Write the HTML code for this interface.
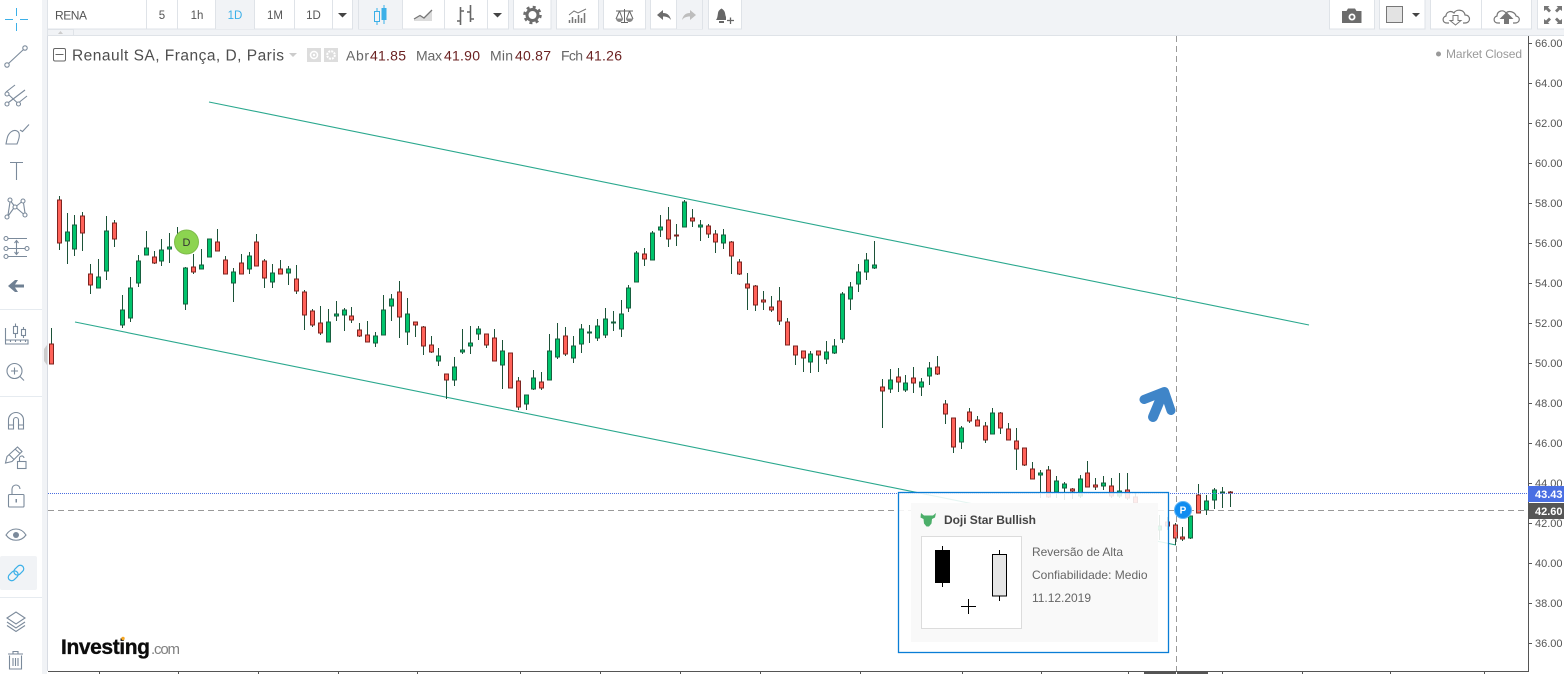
<!DOCTYPE html>
<html><head><meta charset="utf-8"><title>Renault SA</title>
<style>
html,body{margin:0;padding:0;background:#fff;width:1564px;height:674px;overflow:hidden}
svg{display:block}
text{font-family:"Liberation Sans",sans-serif}
.b{fill:#fff;stroke:#dfe3e8;stroke-width:1}
.lab{font-size:11.5px;fill:#555;text-anchor:middle}
.i{fill:none;stroke:#7b8a9b;stroke-width:1.1}
.t{fill:none;stroke:#777;stroke-width:1.2}
.ax{font-size:11px;fill:#555}
</style></head><body>
<svg width="1564" height="674" viewBox="0 0 1564 674" xmlns="http://www.w3.org/2000/svg">
<rect width="1564" height="674" fill="#fff"/>
<!-- lines -->
<g fill="none">
<path d="M209 102L1309 325" stroke="#2aa88e" stroke-width="1.1"/>
<path d="M75 322L1176 545" stroke="#2aa88e" stroke-width="1.1"/>
</g>
<!-- wicks -->
<path fill="none" stroke="#1c5238" stroke-width="1" d="M51.5 328V364M59.5 196V250M67.5 213V264M74.5 215V256M82.5 212V251M90.5 264V294M98.5 259V288M106.5 216V280M114.5 220V247M122.5 295V328M130.5 277V322M138.5 255V287M146.5 231V255M154.5 251V264M161.5 239V266M169.5 233V263M177.5 227V245M185.5 267V310M193.5 254V274M201.5 249V269M209.5 239V257M217.5 229V251M225.5 256V274M233.5 268V302M241.5 254V274M249.5 252V274M256.5 234V266M264.5 259V288M272.5 264V288M280.5 260V274M288.5 266V285M296.5 265V294M304.5 290V330M312.5 309V327M320.5 306V335M328.5 309V342M336.5 301V321M344.5 308V331M351.5 307V323M359.5 323V337M367.5 321V342M375.5 332V347M383.5 295V335M391.5 294V321M399.5 281V338M407.5 298V345M415.5 322V337M423.5 326V355M431.5 336V353M438.5 348V366M446.5 374V399M454.5 357V386M462.5 329V354M470.5 326V354M478.5 326V340M486.5 334V348M494.5 329V361M502.5 340V389M510.5 353V388M518.5 377V410M526.5 395V410M533.5 370V390M541.5 372V390M549.5 334V380M557.5 323V359M565.5 327V356M573.5 336V363M581.5 324V353M589.5 325V343M597.5 319V341M605.5 308V338M613.5 311V331M621.5 300V337M628.5 285V312M636.5 251V282M644.5 248V266M652.5 231V260M660.5 215V237M668.5 207V247M676.5 224V246M684.5 200V227M692.5 209V227M700.5 220V241M708.5 224V238M715.5 230V253M723.5 229V249M731.5 241V274M739.5 259V275M747.5 273V310M755.5 285V311M763.5 291V310M771.5 296V312M779.5 287V325M787.5 318V345M795.5 346V365M803.5 351V372M810.5 351V373M818.5 351V372M826.5 341V364M834.5 339V354M842.5 292V343M850.5 282V310M858.5 264V292M866.5 253V280M874.5 241V269M882.5 379V428M890.5 369V393M898.5 368V392M905.5 375V392M913.5 367V393M921.5 378V396M929.5 362V385M937.5 356V375M945.5 400V424M953.5 418V453M961.5 426V449M969.5 408V423M977.5 416V426M985.5 422V443M992.5 408V434M1000.5 412V434M1008.5 423V440M1016.5 428V470M1024.5 448V466M1032.5 462V479M1040.5 470V498M1048.5 466V498M1056.5 476V498M1064.5 482V500M1072.5 488V499M1080.5 475V498M1087.5 461V487M1095.5 478V490M1103.5 476V490M1111.5 478V498M1119.5 473V498M1127.5 473V500M1135.5 493V505M1159.5 515V540M1167.5 517V530M1175.5 523V545M1182.5 527V541M1190.5 516V539M1198.5 484V513M1206.5 495V515M1214.5 488V509M1222.5 487V508M1230.5 491V507"/>
<!-- green bodies -->
<path fill="#00c46c" stroke="#17603f" stroke-width="1" d="M65.5 232h4V241h-4zM72.5 225h4V249h-4zM96.5 277h4V288h-4zM104.5 231h4V271h-4zM120.5 310h4V325h-4zM128.5 288h4V318h-4zM136.5 261h4V283h-4zM144.5 248h4V255h-4zM159.5 250h4V261h-4zM167.5 247h4V249h-4zM183.5 268h4V304h-4zM199.5 265h4V269h-4zM207.5 239h4V257h-4zM231.5 272h4V283h-4zM247.5 256h4V269h-4zM270.5 273h4V282h-4zM286.5 269h4V273h-4zM326.5 322h4V342h-4zM334.5 314h4V316h-4zM342.5 310h4V315h-4zM373.5 336h4V343h-4zM381.5 310h4V335h-4zM389.5 299h4V306h-4zM405.5 314h4V332h-4zM436.5 356h4V361h-4zM452.5 367h4V380h-4zM460.5 350h4V352h-4zM468.5 343h4V346h-4zM476.5 329h4V334h-4zM500.5 351h4V365h-4zM524.5 395h4V404h-4zM531.5 378h4V389h-4zM547.5 351h4V380h-4zM555.5 339h4V357h-4zM571.5 346h4V358h-4zM579.5 329h4V344h-4zM587.5 332h4V333h-4zM595.5 326h4V338h-4zM603.5 319h4V335h-4zM611.5 322h4V323h-4zM619.5 314h4V329h-4zM626.5 288h4V308h-4zM634.5 253h4V282h-4zM650.5 233h4V260h-4zM658.5 227h4V230h-4zM682.5 202h4V227h-4zM698.5 225h4V227h-4zM721.5 235h4V243h-4zM808.5 354h4V362h-4zM824.5 352h4V359h-4zM832.5 346h4V353h-4zM840.5 294h4V339h-4zM848.5 287h4V299h-4zM856.5 272h4V284h-4zM864.5 260h4V272h-4zM872.5 265h4V268h-4zM888.5 380h4V389h-4zM903.5 383h4V390h-4zM919.5 382h4V387h-4zM927.5 368h4V376h-4zM959.5 428h4V442h-4zM990.5 413h4V434h-4zM1038.5 473h4V475h-4zM1054.5 481h4V492h-4zM1062.5 484h4V488h-4zM1078.5 479h4V496h-4zM1101.5 483h4V486h-4zM1117.5 491h4V496h-4zM1157.5 526h4V530h-4zM1188.5 516h4V538h-4zM1204.5 501h4V510h-4zM1212.5 490h4V500h-4zM1220.5 492h4V493h-4z"/>
<!-- red bodies -->
<path fill="#ff6259" stroke="#7d2420" stroke-width="1" d="M49.5 344h4V364h-4zM57.5 200h4V243h-4zM80.5 216h4V233h-4zM88.5 274h4V285h-4zM112.5 223h4V239h-4zM152.5 257h4V263h-4zM191.5 267h4V272h-4zM215.5 242h4V251h-4zM223.5 260h4V274h-4zM239.5 263h4V274h-4zM254.5 242h4V266h-4zM262.5 261h4V278h-4zM278.5 269h4V274h-4zM294.5 279h4V291h-4zM302.5 292h4V315h-4zM310.5 311h4V325h-4zM318.5 323h4V333h-4zM349.5 316h4V320h-4zM357.5 330h4V336h-4zM365.5 335h4V342h-4zM397.5 292h4V317h-4zM413.5 322h4V325h-4zM421.5 327h4V346h-4zM429.5 345h4V352h-4zM444.5 374h4V380h-4zM484.5 334h4V345h-4zM492.5 338h4V361h-4zM508.5 353h4V388h-4zM516.5 381h4V407h-4zM539.5 382h4V388h-4zM563.5 336h4V354h-4zM642.5 254h4V259h-4zM666.5 220h4V239h-4zM674.5 235h4V236h-4zM690.5 218h4V221h-4zM706.5 226h4V234h-4zM713.5 234h4V242h-4zM729.5 242h4V256h-4zM737.5 262h4V274h-4zM745.5 284h4V288h-4zM753.5 286h4V305h-4zM761.5 300h4V302h-4zM769.5 307h4V310h-4zM777.5 301h4V321h-4zM785.5 322h4V345h-4zM793.5 346h4V355h-4zM801.5 351h4V358h-4zM816.5 351h4V355h-4zM880.5 387h4V391h-4zM896.5 377h4V382h-4zM911.5 378h4V383h-4zM935.5 367h4V374h-4zM943.5 404h4V414h-4zM951.5 418h4V447h-4zM967.5 412h4V421h-4zM975.5 420h4V426h-4zM983.5 426h4V440h-4zM998.5 413h4V428h-4zM1006.5 429h4V440h-4zM1014.5 441h4V449h-4zM1022.5 448h4V465h-4zM1030.5 469h4V479h-4zM1046.5 470h4V497h-4zM1070.5 489h4V491h-4zM1085.5 473h4V487h-4zM1093.5 485h4V487h-4zM1109.5 486h4V496h-4zM1125.5 490h4V498h-4zM1133.5 497h4V503h-4zM1165.5 522h4V526h-4zM1173.5 525h4V538h-4zM1180.5 537h4V539h-4zM1196.5 495h4V513h-4zM1228.5 492h4V493h-4z"/>
<!-- price / cross lines -->
<path d="M48 493.5H1528" stroke="#4a6ee0" stroke-width="1" stroke-dasharray="1 1" fill="none"/>
<path d="M48 510.5H1528" stroke="#999" stroke-width="1" stroke-dasharray="6 4" fill="none"/>
<path d="M1176.5 36V671" stroke="#999" stroke-width="1" stroke-dasharray="6 4" fill="none"/>
<!-- D marker -->
<circle cx="186.5" cy="242" r="12" fill="#8cd450" stroke="#7fbb4c" stroke-width="1"/>
<text x="186.5" y="246" font-size="11" fill="#333" text-anchor="middle">D</text>
<!-- arrow -->
<g fill="none" stroke="#3f85c8" stroke-linecap="round" stroke-linejoin="round">
<path d="M1144 399.5L1164.500 391.500L1171 410.500" stroke-width="9"/>
<path d="M1163 393L1153 417" stroke-width="10"/>
</g>
<!-- tooltip -->
<rect x="898.5" y="492.5" width="270" height="160" fill="#fff" fill-opacity=".88" stroke="#0a7dd6" stroke-width="1.3"/>
<rect x="911" y="503" width="247" height="139" fill="#f9f9f9"/>
<path d="M921 513l3 2.500h9l3-2.500l-1 4.500l-3 1.500l-.5 4.500l-2.500 3h-2.500l-2.500-3l-.5-4.500l-3-1.500z" fill="#4caf6a"/>
<text x="944" y="524" font-size="12" font-weight="bold" fill="#444" textLength="92">Doji Star Bullish</text>
<rect x="921.500" y="536.500" width="100" height="92" fill="#fff" stroke="#dcdcdc"/>
<path d="M942.500 546V587M968.500 599V614M961 606.500H976M999.500 550V601" stroke="#000" fill="none"/>
<rect x="935" y="550" width="15" height="33" fill="#000"/>
<rect x="992.500" y="554.500" width="14" height="41.500" fill="#e6e6e6" stroke="#000"/>
<g font-size="12" fill="#666">
<text x="1032" y="556" textLength="91">Reversão de Alta</text>
<text x="1032" y="579" textLength="115.500">Confiabilidade: Medio</text>
<text x="1032" y="602" textLength="59">11.12.2019</text>
</g>
<!-- P marker -->
<circle cx="1183" cy="510" r="8.500" fill="#0f8cf0" stroke="#5fb4f5" stroke-width="1"/>
<text x="1183" y="513.500" font-size="10" font-weight="bold" fill="#fff" text-anchor="middle">P</text>
<!-- legend -->
<rect x="53.500" y="48.500" width="12" height="12.500" rx="1.500" fill="#fff" stroke="#666"/>
<path d="M55.500 54.500H63.500" stroke="#666"/>
<text x="72" y="60.500" font-size="15.500" fill="#4e4e4e" textLength="212">Renault SA, França, D, Paris</text>
<path d="M289 53h8l-4 4z" fill="#ccc"/>
<rect x="307" y="48" width="14" height="14" fill="#ddd"/><circle cx="314" cy="55" r="3.500" fill="none" stroke="#fff" stroke-width="1.500"/><circle cx="314" cy="55" r="1.200" fill="#fff"/>
<rect x="324" y="48" width="14" height="14" fill="#ddd"/><circle cx="331" cy="55" r="3.800" fill="none" stroke="#fff" stroke-width="2" stroke-dasharray="2 1"/>
<g font-size="14" fill="#666">
<text x="346" y="60.500" textLength="23">Abr</text>
<text x="416" y="60.500" textLength="26">Max</text>
<text x="490" y="60.500" textLength="23">Min</text>
<text x="561" y="60.500" textLength="22">Fch</text>
</g>
<g font-size="14" fill="#6b2222">
<text x="370" y="60.500" textLength="36">41.85</text>
<text x="444" y="60.500" textLength="36">41.90</text>
<text x="515" y="60.500" textLength="36">40.87</text>
<text x="586" y="60.500" textLength="36">41.26</text>
</g>
<circle cx="1438.500" cy="54" r="2.500" fill="#999"/>
<text x="1446" y="58" font-size="12" fill="#9a9a9a" textLength="76">Market Closed</text>
<!-- logo -->
<text x="61" y="654" font-size="21" font-weight="bold" fill="#0c0c0c" stroke="#0c0c0c" stroke-width=".35" textLength="89">Investing</text>
<text x="151" y="654" font-size="15" fill="#808080" textLength="29">.com</text>
<circle cx="123" cy="638.500" r="1.700" fill="#f5a623"/>
<!-- top bar -->
<rect x="0" y="0" width="1564" height="35" fill="#f1f3f6"/>
<path d="M0 35.500H1564" stroke="#dfe3e8"/>
<path d="M47.500 29.500H73.500V35M47.500 29V35" fill="none" stroke="#dfe3e8"/>
<path d="M58 34l2.500-3l2.500 3z" fill="#ccc"/>
<rect x="47.500" y="-1" width="305" height="30" class="b"/>
<rect x="215" y="0" width="39" height="29" fill="#f1f3f6"/>
<path d="M146.500 0V29M177.500 0V29M215.500 0V29M254.500 0V29M294.500 0V29M332.500 0V29" stroke="#dfe3e8" fill="none"/>
<text x="55" y="19.500" font-size="12" fill="#555" textLength="32">RENA</text>
<text class="lab" x="162" y="19">5</text>
<text class="lab" x="197" y="19">1h</text>
<text class="lab" x="235" y="19" style="fill:#3cb0e8">1D</text>
<text class="lab" x="275" y="19">1M</text>
<text class="lab" x="313.500" y="19">1D</text>
<path d="M338 13h9l-4.500 4.500z" fill="#444"/>
<rect x="358.500" y="-1" width="150" height="30" class="b"/>
<rect x="359" y="0" width="43" height="29" fill="#f1f3f6"/>
<path d="M402.500 0V29M444.500 0V29M487.500 0V29" stroke="#dfe3e8" fill="none"/>
<!-- candles icon -->
<rect x="374.500" y="11.500" width="5" height="10" fill="none" stroke="#3cb0e8"/>
<path d="M377 8V11M377 22V25" stroke="#3cb0e8"/>
<rect x="381.500" y="8" width="5" height="12" fill="#3cb0e8"/><path d="M384 5V24" stroke="#3cb0e8"/>
<!-- area icon -->
<path d="M414 19l6-3.500l4 2.500l8-8V21H414z" fill="#dcdcdc"/><path d="M414 19l6-3.500l4 2.500l8-8" fill="none" stroke="#777" stroke-width="1.300"/>
<!-- bars icon -->
<path d="M460.500 7V25M457 21h3.500M460.500 11h3.500M470.500 5V22M467 12h3.500M470.500 19h3.500" fill="none" stroke="#666" stroke-width="1.600"/>
<path d="M493 13h9l-4.500 4.500z" fill="#444"/>
<rect x="513.500" y="-1" width="37.500" height="30" class="b"/>
<circle cx="532.500" cy="15" r="5.500" fill="none" stroke="#6c6c6c" stroke-width="3"/>
<circle cx="532.500" cy="15" r="8" fill="none" stroke="#6c6c6c" stroke-width="2.500" stroke-dasharray="3 3.280"/>
<rect x="556.500" y="-1" width="42" height="30" class="b"/>
<path d="M569.500 23v-3M572.500 23v-6M575.500 23v-4M578.500 23v-8M581.500 23v-5M584.500 23v-10" stroke="#777" stroke-width="1.500"/>
<path d="M569 15l5-4l4 2l8-4" fill="none" stroke="#777" stroke-width="1"/>
<rect x="603.500" y="-1" width="42" height="30" class="b"/>
<path d="M624.500 9V22M621 22.500h7M616 11H633M619.500 11l-3.500 8M619.500 11l3 8M629.500 11l-3 8M629.500 11l3.500 8" stroke="#666" fill="none"/>
<path d="M616 18.500a3.500 3.500 0 0 0 7 0zM626 18.500a3.500 3.500 0 0 0 7 0z" fill="#888"/>
<rect x="650.500" y="-1" width="52" height="30" class="b"/>
<rect x="677" y="0" width="25" height="29" fill="#f1f3f6"/>
<path d="M676.500 0V29" stroke="#dfe3e8"/>
<path d="M657 15l6-5v3c5 0 7 3 8 7c-2-2.500-4-3.500-8-3.500v3.500z" fill="#6c6c6c"/>
<path d="M696 15l-6-5v3c-5 0-7 3-8 7c2-2.500 4-3.500 8-3.500v3.500z" fill="#bdbdbd"/>
<rect x="708.500" y="-1" width="33" height="30" class="b"/>
<path d="M716 20c1.500-2 1.500-4 2-7c.4-2.500 2-3.500 3.500-4.500c1.500 1 3 2 3.500 4.500c.3 1.500.5 3 1 4v3z" fill="#666"/><rect x="719" y="21" width="5" height="2" fill="#666"/>
<path d="M730.500 17.500v6.500M727 20.500h7" stroke="#666" stroke-width="1.300"/>
<rect x="1329.500" y="-1" width="45" height="30" class="b"/>
<path d="M1342 11h4.500l1.500-2.500h7l1.500 2.500h5v12h-19.500z" fill="#6c6c6c" rx="1"/><circle cx="1352" cy="17" r="3.500" fill="#fff"/><circle cx="1352" cy="17" r="1.700" fill="#6c6c6c"/>
<rect x="1379.500" y="-1" width="45.500" height="30" class="b"/>
<rect x="1386.500" y="6.500" width="16" height="16" fill="#e3e3e3" stroke="#777"/>
<path d="M1412 13h8l-4 4z" fill="#444"/>
<rect x="1430.500" y="-1" width="101" height="30" class="b"/>
<path d="M1481.500 0V29" stroke="#dfe3e8"/>
<path d="M1449 23h-2c-5 0-5-6-1-7c0-4 5-6 8-3c2-4 10-4 11 2c6 0 6 8 0 8h-2" class="t" stroke-width="1"/>
<path d="M1453 15.500h5v5h3l-5.500 4.500l-5.500-4.500h3z" fill="#fff" stroke="#777"/>
<path d="M1500 23h-2c-5 0-5-6-1-7c0-5 6-7 9-3c3-3 9-1 10 3c5 1 4 7-1 7h-2" class="t" stroke-width="1"/>
<path d="M1504 24v-5h-4.500l7-7l7 7h-4.500v5z" fill="#777"/>
<rect x="1537.500" y="-1" width="30" height="30" class="b"/>
<path d="M1544 6h5.500l-1.500 1.500l3 3l-2 2l-3-3l-2 1.500zM1562 6h-5.500l1.500 1.500l-3 3l2 2l3-3l2 1.500zM1544 24h5.500l-1.500-1.500l3-3l-2-2l-3 3l-2-1.500zM1562 24h-5.500l1.500-1.500l-3-3l2-2l3 3l2-1.500z" fill="#777"/>
<!-- left bar -->
<rect x="0" y="0" width="42" height="674" fill="#fff"/>
<rect x="42" y="0" width="5" height="674" fill="#f1f3f6"/>
<path d="M47.500 36V671" stroke="#d8dce3"/>
<path d="M47 345l-3 4v12l3 4z" fill="#ccc"/>
<path d="M0 309.500H42M0 396.500H42M0 597.500H42" stroke="#e6ebf0"/>
<rect x="0" y="556" width="37" height="34" rx="2" fill="#f1f3f6"/>
<path d="M5 19.500H13M20 19.500H28M16.500 8V16M16.500 23V31" stroke="#3cb0e8" fill="none"/>
<g class="i">
<circle cx="25" cy="48" r="2.200"/><circle cx="7" cy="65" r="2.200"/><path d="M23.500 49.500L8.500 63.500"/>
<circle cx="7" cy="104" r="2"/><circle cx="18.500" cy="104" r="2"/><circle cx="7" cy="94" r="2"/>
<path d="M6 92L15 85M8.500 102.500L25 90M19.500 102L27 96M9 95L17 102.500"/>
<path d="M6 144L7 139C8 133 13 129 17 131C21 133 19 139 17 144ZM20 130l2.500 1.500L29 124.500"/>
<path d="M10 162.500H23M16.500 162.500V180"/>
<circle cx="10" cy="200" r="2"/><circle cx="23" cy="201" r="2"/><circle cx="15" cy="207" r="2"/><circle cx="7" cy="217" r="2"/><circle cx="25" cy="215" r="2"/>
<path d="M10 202L8 215M11 201.500L14 205.500M16.500 206L21.500 202M23.500 203L25 213M16.500 208L23.500 214M13.500 208.500L8.500 215.500"/>
<circle cx="6" cy="238.500" r="2"/><circle cx="6" cy="248.500" r="2"/><circle cx="27" cy="248.500" r="2"/><circle cx="6" cy="256.500" r="2"/>
<path d="M8 238.500H27M8 248.500H25M8 256.500H27M16.500 241V254M14.500 243L16.500 240.500L18.500 243M14.500 252L16.500 254.500L18.500 252"/>
<path d="M5.500 328V344H28V340H5.500M10.500 340V342M15.500 340V342M20.500 340V342M25.500 340V342M15.500 323.500V338M23.500 327V338"/>
<rect x="13.500" y="326.500" width="4" height="7" fill="#fff"/><rect x="21.500" y="329.500" width="4" height="6" fill="#fff"/>
<circle cx="14.500" cy="371" r="7.500"/><path d="M11 371H18M14.500 367.500V374.500M20 376.500L24 380.500"/>
<path d="M8.500 429V420a7.500 7.500 0 0 1 15 0V429H18.500V420a2.500 2.500 0 0 0-5 0V429zM8.500 425H13.500M18.500 425H23.500"/>
<path d="M5.500 463L7 456.500L17.500 447L22 451.500L12 461.500ZM9 454.500L14 459.500M15 449L20 453.500"/>
<rect x="17.500" y="461.500" width="8.500" height="7" fill="#fff"/><path d="M19.500 461.500V458.500a2 2 0 0 1 4.500-.5"/>
<rect x="8.500" y="494.500" width="15.500" height="12.500" rx="1"/><path d="M12 494V489a4 4 0 0 1 8 0"/>
<path d="M6 535c5-8 15-8 20 0c-5 7-15 7-20 0z"/>
<path d="M7 618L16 612L25 618L16 624ZM7 622L16 628L25 622M7 625.500L16 631.500L25 625.500"/>
<path d="M9.500 655.500V669H21.500V655.500M8 654H23M13 654V651.500H18V654M13 658V666M15.500 658V666M18 658V666"/>
</g>
<path d="M8 286l7-6h3l-3 4.500h9v3h-9l3 4.500h-3z" fill="#6f8093"/>
<rect x="15.500" y="499" width="1.500" height="3.500" fill="#7b8a9b"/>
<circle cx="16" cy="535" r="3" fill="#7b8a9b"/>
<g transform="rotate(-45 16 573)" fill="none" stroke="#3cb0e8" stroke-width="1.200">
<rect x="6.500" y="569.500" width="11" height="7" rx="3.500"/>
<rect x="14.500" y="569.500" width="11" height="7" rx="3.500"/>
</g>
<!-- axes -->
<path d="M1528.500 36V671.500H48" fill="none" stroke="#555"/>
<path d="M1528 43.500h4M1528 83.500h4M1528 123.500h4M1528 163.500h4M1528 203.500h4M1528 243.500h4M1528 283.500h4M1528 323.500h4M1528 363.500h4M1528 403.500h4M1528 443.500h4M1528 483.500h4M1528 523.500h4M1528 563.500h4M1528 603.500h4M1528 643.500h4" stroke="#555" fill="none"/>
<path d="M99.500 671v3M178.500 671v3M258.500 671v3M338.500 671v3M417.500 671v3M520.500 671v3M600.500 671v3M680.500 671v3M760.500 671v3M860.500 671v3M962.500 671v3M1041.500 671v3M1128.500 671v3M1222.500 671v3M1302.500 671v3M1390.500 671v3M1484.500 671v3" stroke="#555" fill="none"/>
<path d="M1144 672h32v2h-32zM1177 672h31v2h-31z" fill="#555"/>
<g class="ax">
<text x="1535" y="47">66.00</text><text x="1535" y="87">64.00</text><text x="1535" y="127">62.00</text><text x="1535" y="167">60.00</text><text x="1535" y="207">58.00</text><text x="1535" y="247">56.00</text><text x="1535" y="287">54.00</text><text x="1535" y="327">52.00</text><text x="1535" y="367">50.00</text><text x="1535" y="407">48.00</text><text x="1535" y="447">46.00</text><text x="1535" y="487">44.00</text><text x="1535" y="527">42.00</text><text x="1535" y="567">40.00</text><text x="1535" y="607">38.00</text><text x="1535" y="647">36.00</text>
</g>
<rect x="1528" y="486" width="36" height="16" fill="#4a6fe3"/>
<rect x="1528" y="503" width="36" height="16" fill="#555"/>
<text x="1535" y="498" font-size="11" font-weight="bold" fill="#fff">43.43</text>
<text x="1535" y="515" font-size="11" font-weight="bold" fill="#fff">42.60</text>
</svg>
</body></html>
